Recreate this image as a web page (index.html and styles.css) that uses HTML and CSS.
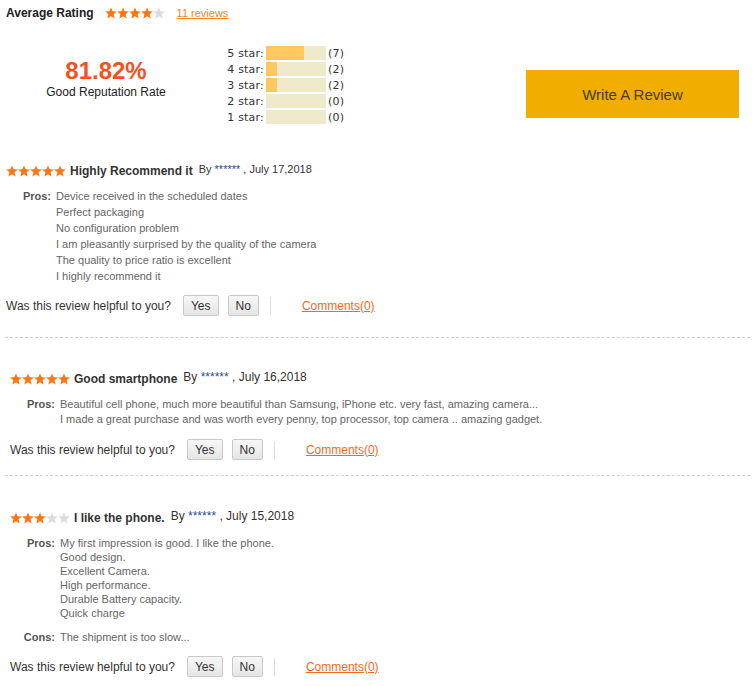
FILE: index.html
```html
<!DOCTYPE html>
<html lang="en">

<head>
    <meta charset="UTF-8">
    <meta name="viewport" content="width=device-width, initial-scale=1.0">
    <title>Customer Reviews</title>
    <link rel="stylesheet" href="styles.css">
</head>

<body>
    <!-- star shape used by every rating -->
    <svg class="defs" width="0" height="0">
        <defs>
            <polygon id="star" points="6,0.4 7.6,4.3 11.8,4.6 8.6,7.3 9.6,11.5 6,9.2 2.4,11.5 3.4,7.3 0.2,4.6 4.4,4.3" />
        </defs>
    </svg>

    <div class="page">
        <div class="summary-head">
            <span class="avg-label">Average Rating</span>
            <svg class="stars" width="60" height="12" viewBox="0 0 60 12">
                <use href="#star" x="0" class="on" />
                <use href="#star" x="12" class="on" />
                <use href="#star" x="24" class="on" />
                <use href="#star" x="36" class="on" />
                <use href="#star" x="48" class="off" />
            </svg>
            <a href="#" class="review-count">11 reviews</a>
        </div>

        <div class="summary">
            <div class="reputation">
                <div class="rate">81.82%</div>
                <div class="rate-label">Good Reputation Rate</div>
            </div>
            <ul class="breakdown">
                <li><span class="level">5 star:</span><span class="bar"><span class="fill" style="width: 38px"></span></span><span class="num">(7)</span></li>
                <li><span class="level">4 star:</span><span class="bar"><span class="fill" style="width: 11px"></span></span><span class="num">(2)</span></li>
                <li><span class="level">3 star:</span><span class="bar"><span class="fill" style="width: 11px"></span></span><span class="num">(2)</span></li>
                <li><span class="level">2 star:</span><span class="bar"></span><span class="num">(0)</span></li>
                <li><span class="level">1 star:</span><span class="bar"></span><span class="num">(0)</span></li>
            </ul>
            <button class="write-btn">Write A Review</button>
        </div>

        <!-- review 1 -->
        <div class="review first">
            <div class="review-head">
                <svg class="stars" width="60" height="12" viewBox="0 0 60 12">
                    <use href="#star" x="0" class="on" />
                    <use href="#star" x="12" class="on" />
                    <use href="#star" x="24" class="on" />
                    <use href="#star" x="36" class="on" />
                    <use href="#star" x="48" class="on" />
                </svg>
                <span class="title">Highly Recommend it</span>
                <span class="by small">By <span class="user">******</span> , July 17,2018</span>
            </div>
            <div class="notes lh16">
                <span class="label">Pros:</span>
                <div class="text">
                    Device received in the scheduled dates<br>
                    Perfect packaging<br>
                    No configuration problem<br>
                    I am pleasantly surprised by the quality of the camera<br>
                    The quality to price ratio is excellent<br>
                    I highly recommend it
                </div>
            </div>
            <div class="helpful">
                <span>Was this review helpful to you?</span>
                <button class="vote">Yes</button>
                <button class="vote">No</button>
                <span class="sep"></span>
                <a href="#" class="comments">Comments(0)</a>
            </div>
        </div>

        <!-- review 2 -->
        <div class="review second">
            <div class="review-head">
                <svg class="stars" width="60" height="12" viewBox="0 0 60 12">
                    <use href="#star" x="0" class="on" />
                    <use href="#star" x="12" class="on" />
                    <use href="#star" x="24" class="on" />
                    <use href="#star" x="36" class="on" />
                    <use href="#star" x="48" class="on" />
                </svg>
                <span class="title">Good smartphone</span>
                <span class="by">By <span class="user">******</span> , July 16,2018</span>
            </div>
            <div class="notes lh15">
                <span class="label">Pros:</span>
                <div class="text">
                    Beautiful cell phone, much more beautiful than Samsung, iPhone etc. very fast, amazing camera...<br>
                    I made a great purchase and was worth every penny, top processor, top camera .. amazing gadget.
                </div>
            </div>
            <div class="helpful">
                <span>Was this review helpful to you?</span>
                <button class="vote">Yes</button>
                <button class="vote">No</button>
                <span class="sep"></span>
                <a href="#" class="comments">Comments(0)</a>
            </div>
        </div>

        <!-- review 3 -->
        <div class="review third">
            <div class="review-head">
                <svg class="stars" width="60" height="12" viewBox="0 0 60 12">
                    <use href="#star" x="0" class="on" />
                    <use href="#star" x="12" class="on" />
                    <use href="#star" x="24" class="on" />
                    <use href="#star" x="36" class="off" />
                    <use href="#star" x="48" class="off" />
                </svg>
                <span class="title">I like the phone.</span>
                <span class="by">By <span class="user">******</span> , July 15,2018</span>
            </div>
            <div class="notes lh14">
                <span class="label">Pros:</span>
                <div class="text">
                    My first impression is good. I like the phone.<br>
                    Good design.<br>
                    Excellent Camera.<br>
                    High performance.<br>
                    Durable Battery capacity.<br>
                    Quick charge
                </div>
                <span class="label">Cons:</span>
                <div class="text">The shipment is too slow...</div>
            </div>
            <div class="helpful">
                <span>Was this review helpful to you?</span>
                <button class="vote">Yes</button>
                <button class="vote">No</button>
                <span class="sep"></span>
                <a href="#" class="comments">Comments(0)</a>
            </div>
        </div>
    </div>
</body>

</html>
```

FILE: styles.css
```css
body,
html {
    margin: 0;
    font-family: "Liberation Sans", Arial, sans-serif;
    background: #fff;
    color: #333;
}

* {
    box-sizing: border-box;
}

.defs {
    position: absolute;
}

.stars {
    display: block;
    flex-shrink: 0;
}

.stars .on {
    fill: #ff7412;
}

.stars .off {
    fill: #dcdcdc;
}

/* top summary */
.summary-head {
    display: flex;
    align-items: center;
    height: 20px;
    margin-top: 3px;
    padding-left: 6px;
}

.avg-label {
    font-size: 12px;
    font-weight: bold;
    color: #222;
    margin-right: 11px;
}

.review-count {
    margin-left: 12px;
    font-size: 11px;
    color: #f0861c;
}

.summary {
    display: flex;
    align-items: flex-start;
    margin-top: 23px;
    padding-left: 6px;
}

.reputation {
    width: 200px;
    margin-top: 12px;
    text-align: center;
}

.rate {
    font-size: 24px;
    line-height: 26px;
    font-weight: bold;
    color: #f4511e;
}

.rate-label {
    font-size: 12px;
    line-height: 16px;
    color: #222;
}

.breakdown {
    list-style: none;
    margin: 0;
    padding: 0;
    font-family: "DejaVu Sans", Verdana, sans-serif;
    font-size: 11px;
    letter-spacing: 0.2px;
    color: #333;
}

.breakdown li {
    display: flex;
    align-items: center;
    height: 14px;
    margin-bottom: 2px;
}

.level {
    width: 58px;
    text-align: right;
}

.bar {
    width: 60px;
    height: 14px;
    margin: 0 2px;
    background: #eeeacb;
}

.fill {
    display: block;
    height: 100%;
    background: #ffc75f;
}

.write-btn {
    margin: 24px 16px 0 auto;
    width: 213px;
    height: 48px;
    border: none;
    background: #f1ae00;
    color: #4b3a12;
    font-family: "Liberation Sans", Arial, sans-serif;
    font-size: 15px;
}

/* reviews */
.review {
    padding-left: 10px;
    border-top: 1px dashed #cfcfcf;
    margin: 0 5px 0 5px;
}

.review.first {
    border-top: none;
    margin-top: 37px;
    padding-left: 1px;
    padding-bottom: 21px;
}

.review.second {
    padding-top: 33px;
    padding-left: 5px;
    padding-bottom: 15px;
}

.review.third {
    padding-top: 34px;
    padding-left: 5px;
}

.review-head {
    display: flex;
    align-items: center;
    height: 16px;
}

.title {
    margin-left: 4px;
    font-size: 12px;
    font-weight: bold;
    color: #333;
}

.by {
    align-self: flex-start;
    margin-left: 6px;
    font-size: 12px;
    line-height: 13px;
    color: #333;
}

.by.small {
    font-size: 11px;
}

.user {
    color: #1f4f8a;
}

.notes {
    display: grid;
    grid-template-columns: 45px 1fr;
    column-gap: 5px;
    row-gap: 10px;
    margin-top: 9px;
    font-size: 11px;
    color: #666;
}

.notes.lh15,
.notes.lh14 {
    margin-top: 10px;
}

.lh16 {
    line-height: 16px;
}

.lh15 {
    line-height: 15px;
}

.lh14 {
    line-height: 14px;
}

.label {
    text-align: right;
    font-weight: bold;
    color: #555;
}

.helpful {
    display: flex;
    align-items: center;
    margin-top: 11px;
    font-size: 12px;
    color: #333;
}

.notes.lh15 + .helpful,
.notes.lh14 + .helpful {
    margin-top: 12px;
}

.vote {
    height: 21px;
    margin-left: 12px;
    padding: 0 7px;
    border: 1px solid #c9c9c9;
    border-radius: 2px;
    background: linear-gradient(#f7f7f7, #e5e5e5);
    font-family: "Liberation Sans", Arial, sans-serif;
    font-size: 12px;
    color: #333;
}

.vote + .vote {
    margin-left: 9px;
}

.sep {
    width: 1px;
    height: 18px;
    margin-left: 11px;
    background: #ddd;
}

.comments {
    margin-left: 31px;
    color: #f26b1d;
}
```
